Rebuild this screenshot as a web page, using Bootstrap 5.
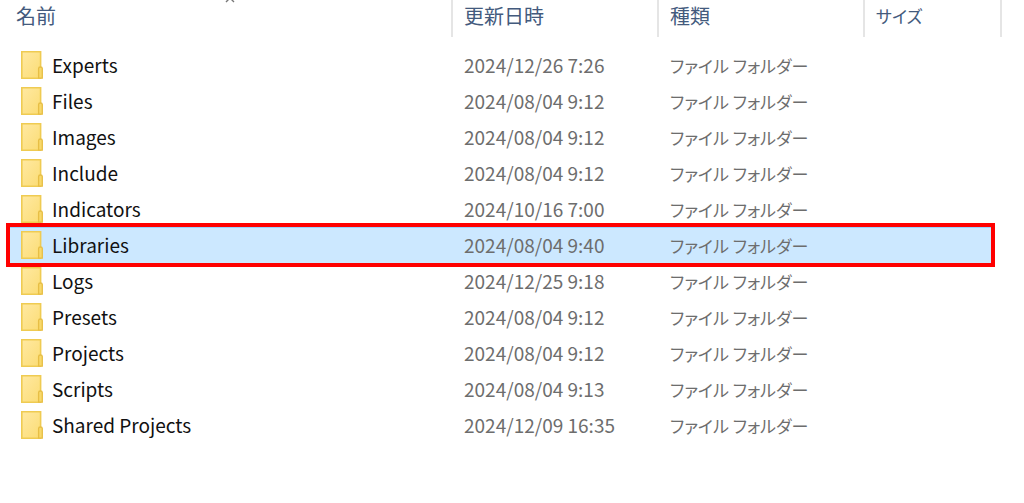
<!DOCTYPE html>
<html lang="ja">
<head>
<meta charset="utf-8">
<meta name="viewport" content="width=device-width, initial-scale=1">
<title>MQL5</title>
<link href="https://cdn.jsdelivr.net/npm/bootstrap@5.3.0/dist/css/bootstrap.min.css" rel="stylesheet">
<style>
body { font-family: "Noto Sans CJK JP", sans-serif; background: #fff; color: #111; font-size: 19px; line-height: 24px; }
.file-pane { padding: 0 22px 0 10px; }
.file-table { table-layout: fixed; }
.file-table th { height: 37px; padding: 0 0 6px 11px; font-weight: 400; font-size: 20px; color: #435a7d; border-right: 2px solid #e5e5e5; }
.file-table th:first-child { padding-left: 6px; }
.file-table td { height: 36px; padding: 0 0 0 12px; color: #6d6d6d; white-space: nowrap; }
.file-table td:first-child { padding-left: 10px; color: #111; }
.col-date, .col-kind { width: 206px; }
.col-bytes { width: 137px; }
.kana { font-size: 17px; font-feature-settings: "palt"; }
.file-table .spacer td { height: 10px; }
.selected-row { z-index: 0; }
.selected-mark { inset: -4px 6px -4px -4px; z-index: -1; border: 4px solid #f00; background: #cce8ff; box-shadow: inset 0 1px 0 #99d1ff; }
</style>
</head>
<body>
<svg class="position-absolute" width="0" height="0" aria-hidden="true">
  <linearGradient id="paper" x1="0" y1="0" x2="1" y2="1"><stop offset="0" stop-color="#ffe9a2"/><stop offset="1" stop-color="#fbdc74"/></linearGradient>
</svg>
<main class="file-pane">
<table class="file-table w-100">
  <colgroup><col><col class="col-date"><col class="col-kind"><col class="col-bytes"></colgroup>
  <thead>
    <tr>
      <th scope="col" class="position-relative" aria-sort="ascending">名前
        <svg class="position-absolute top-0 start-50 translate-middle-x" width="16" height="3" viewBox="0 0 16 3" aria-hidden="true"><path d="M7 -2 3 2M7 -2 11 2" fill="none" stroke="#777" stroke-width="1.4"/></svg>
      </th>
      <th scope="col">更新日時</th>
      <th scope="col">種類</th>
      <th scope="col"><span class="kana">サイズ</span></th>
    </tr>
  </thead>
  <tbody id="files"><tr class="spacer" aria-hidden="true"><td colspan="4"></td></tr></tbody>
</table>
</main>
<script src="https://cdn.jsdelivr.net/npm/bootstrap@5.3.0/dist/js/bootstrap.bundle.min.js"></script>
<script>
const folders = [
  ["Experts", "2024/12/26 7:26"], ["Files", "2024/08/04 9:12"], ["Images", "2024/08/04 9:12"],
  ["Include", "2024/08/04 9:12"], ["Indicators", "2024/10/16 7:00"], ["Libraries", "2024/08/04 9:40"],
  ["Logs", "2024/12/25 9:18"], ["Presets", "2024/08/04 9:12"], ["Projects", "2024/08/04 9:12"],
  ["Scripts", "2024/08/04 9:13"], ["Shared Projects", "2024/12/09 16:35"]
];
const icon = `<svg width="24" height="30" viewBox="0 0 24 30" aria-hidden="true"><path d="M1.8 1.8H20.6V28.2H1.8Z" fill="url(#paper)" stroke="#efcb52" stroke-width="1.6"/><path d="M18.6 28.2V18.5Q18.6 17 20.4 17Q22.3 17 22.3 18.5V28.2Z" fill="#f8d96b" stroke="#e7be45" stroke-width="1.3"/></svg>`;
document.getElementById("files").insertAdjacentHTML("beforeend", folders.map(([name, date]) => {
  const selected = name === "Libraries";
  return `<tr class="${selected ? "selected-row position-relative" : ""}">
    <td>${selected ? '<span class="selected-mark position-absolute"></span>' : ""}<div class="d-flex align-items-center gap-2">${icon}<span>${name}</span></div></td>
    <td>${date}</td><td><span class="kana">ファイル フォルダー</span></td><td></td></tr>`;
}).join(""));
</script>
</body>
</html>
